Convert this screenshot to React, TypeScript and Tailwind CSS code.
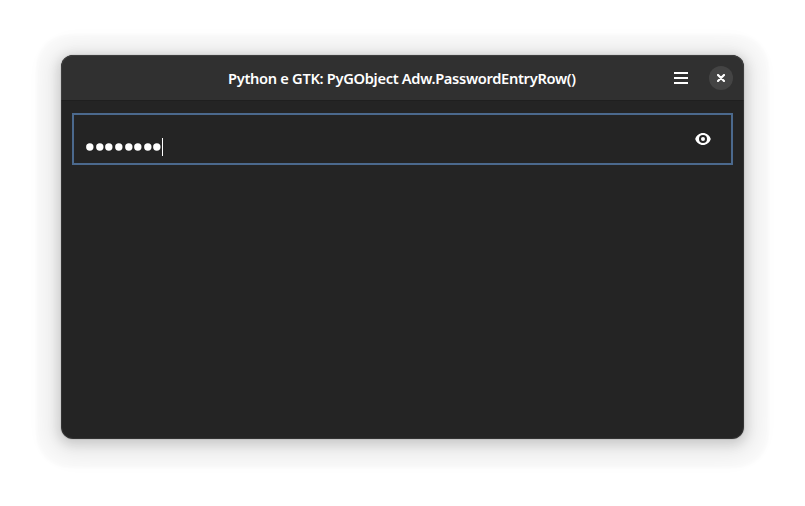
const dots = Array.from({ length: 8 }, (_, i) => i);

function HeaderBar() {
  return (
    <header className="grid h-[46px] shrink-0 grid-cols-[1fr_auto_1fr] items-center border-b border-[#1f1f1f] bg-[#303030] pr-[11px]">
      <span />
      <h1 className="ml-[10px] w-[348px] whitespace-nowrap text-left text-[14.67px] font-semibold leading-5 tracking-[-0.32px]">
        Python e GTK: PyGObject Adw.PasswordEntryRow()
      </h1>
      <div className="flex items-center justify-end gap-[21px]">
        <button aria-label="Menu" className="flex w-[14px] flex-col gap-[3px]">
          <span className="h-[2px] w-full bg-white" />
          <span className="h-[2px] w-full bg-white" />
          <span className="h-[2px] w-full bg-white" />
        </button>
        <button aria-label="Close" className="flex size-6 items-center justify-center rounded-full bg-[#444444]">
          <svg width="8" height="8" viewBox="0 0 8 8" stroke="white" strokeWidth="2.2" strokeLinecap="round">
            <path d="M1 1 7 7M7 1 1 7" />
          </svg>
        </button>
      </div>
    </header>
  );
}

function PasswordRow() {
  return (
    <div className="flex h-[52px] items-start justify-between border-2 border-[#4b698d] pl-3 pr-[20px]">
      <div className="flex items-center pt-[23px]">
        <div className="flex gap-[1.65px]">
          {dots.map((dot) => (
            <svg key={dot} width="8" height="8" viewBox="0 0 8 8" fill="white">
              <circle cx="3.8" cy="4" r="3.7" />
            </svg>
          ))}
        </div>
        <span className="ml-px h-[18px] w-px bg-white" />
      </div>
      <button aria-label="Show password" className="mt-4">
        <svg width="16" height="16" viewBox="0 0 16 16" fill="none">
          <path
            fill="white"
            fillRule="evenodd"
            d="M8 2C4.500 2 1.300 4.500.200 8c1.100 3.500 4.300 6 7.800 6s6.700-2.500 7.800-6C14.700 4.500 11.500 2 8 2Zm0 2a4 4 0 1 1 0 8 4 4 0 0 1 0-8Zm0 2a2 2 0 1 0 0 4 2 2 0 0 0 0-4Z"
          />
        </svg>
      </button>
    </div>
  );
}

export default function App() {
  return (
    <div className="h-[506px] w-[805px] overflow-hidden bg-white pl-[61px] pt-[55px] font-['Noto_Sans',sans-serif] text-white">
      <main className="relative flex h-[384px] w-[683px] flex-col overflow-hidden rounded-[12px] bg-[#242424] shadow-[0_0_0_1px_rgba(0,0,0,0.05),0_3px_12px_2px_rgba(0,0,0,0.15),0_4px_22px_13px_rgba(0,0,0,0.07),0_4px_2px_25px_rgba(0,0,0,0.016)]">
        <HeaderBar />
        <section className="px-[11px] pt-3">
          <PasswordRow />
        </section>
        <div className="pointer-events-none absolute inset-0 rounded-[12px] border border-white/[0.07]" />
      </main>
    </div>
  );
}
